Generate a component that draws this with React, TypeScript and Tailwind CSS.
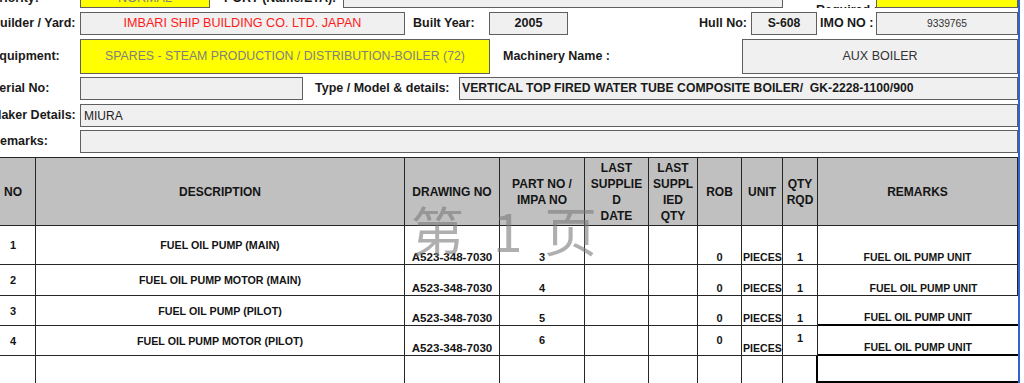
import React from "react";

const lbl = "shrink-0 flex items-center font-bold text-[12.5px] text-[#1a1a1a] whitespace-nowrap";
const box = "shrink-0 flex items-center border border-[#5f5f5f] bg-[#f0f0f0] whitespace-nowrap overflow-hidden";
const yel = "shrink-0 flex items-center border border-[#5f5f5f] bg-[#ffff00] whitespace-nowrap overflow-hidden";

const W = [
  "w-[45px]",
  "w-[369px]",
  "w-[95px]",
  "w-[85px]",
  "w-[64px]",
  "w-[49px]",
  "w-[44px]",
  "w-[41px]",
  "w-[35px]",
  "w-[200px]",
];

type Cell = { t?: string; c: string };

const hc = "shrink-0 flex items-center justify-center text-center border-r border-b border-[#262626]";

function Row({ h, cells }: { h: string; cells: Cell[] }) {
  return (
    <div className={"flex " + h}>
      {cells.map((cell, i) => (
        <div key={i} className={"shrink-0 flex whitespace-nowrap font-bold leading-[14px] text-[#141414] " + W[i] + " " + cell.c}>
          {cell.t ?? ""}
        </div>
      ))}
    </div>
  );
}

const b = " border-r border-b border-[#262626]";
const ctr = "items-center justify-center" + b;
const bot = "items-end justify-center" + b;

export default function App() {
  return (
    <div className="relative w-[1024px] h-[383px] overflow-hidden bg-white font-['Liberation_Sans',Arial,sans-serif] text-[#1a1a1a]">
      <div className="-ml-[9px] -mt-[15px] w-[1027px]">
        {/* Row 0 */}
        <div className="flex h-[23px]">
          <div className={lbl + " w-[89px] pt-[4px]"}>Priority:</div>
          <div className={yel + " w-[130px] justify-center pt-[3px] text-[12.6px] text-[#808080]"}>NORMAL</div>
          <div className={lbl + " w-[133px] pl-[14px] pt-[4px]"}>PORT (Name/ETA):</div>
          <div className={box + " w-[440px]"} />
          <div className="shrink-0 w-[93px] h-[23px] overflow-hidden">
            <div className="mt-[19px] pl-[33px] font-bold text-[12.5px] leading-[12.5px] whitespace-nowrap">Required :</div>
          </div>
          <div className={yel + " w-[142px]"} />
        </div>

        {/* Row 1 */}
        <div className="flex h-[23px] mt-[4px]">
          <div className={lbl + " w-[89px]"}>Builder / Yard:</div>
          <div className={box + " w-[325px] justify-center text-[12.6px] text-[#ff1a1a]"}>IMBARI SHIP BUILDING CO. LTD. JAPAN</div>
          <div className={lbl + " w-[84px] pl-[8px]"}>Built Year:</div>
          <div className={box + " w-[79px] justify-center font-bold text-[12.6px] text-[#1a1a1a]"}>2005</div>
          <div className={lbl + " w-[183px] justify-end pr-[4px]"}>Hull No:</div>
          <div className={box + " w-[66px] justify-center font-bold text-[12.2px] text-[#1a1a1a]"}>S-608</div>
          <div className={lbl + " w-[59px] pl-[3px]"}>IMO NO :</div>
          <div className={box + " w-[142px] justify-center text-[10.3px] text-[#333333]"}>9339765</div>
        </div>

        {/* Row 2 */}
        <div className="flex h-[35px] mt-[4px]">
          <div className={lbl + " w-[89px]"}>Equipment:</div>
          <div className={yel + " w-[410px] justify-center text-[12.3px] text-[#808080]"}>
            SPARES - STEAM PRODUCTION / DISTRIBUTION-BOILER (72)
          </div>
          <div className={lbl + " w-[252px] pl-[13px]"}>Machinery Name :</div>
          <div className={box + " w-[276px] justify-center text-[12.5px] text-[#333333]"}>AUX BOILER</div>
        </div>

        {/* Row 3 */}
        <div className="flex h-[23px] mt-[3px]">
          <div className={lbl + " w-[89px]"}>Serial No:</div>
          <div className={box + " w-[223px]"} />
          <div className={lbl + " w-[156px] pl-[12px]"}>Type / Model &amp; details:</div>
          <div className={box + " w-[559px] pl-[2px] font-bold text-[12.2px] text-[#1a1a1a] whitespace-pre"}>
            {"VERTICAL TOP FIRED WATER TUBE COMPOSITE BOILER/  GK-2228-1100/900"}
          </div>
        </div>

        {/* Row 4 */}
        <div className="flex h-[23px] mt-[4px]">
          <div className={lbl + " w-[89px]"}>Maker Details:</div>
          <div className={box + " w-[938px] pl-[3px] text-[12px] text-[#222222]"}>MIURA</div>
        </div>

        {/* Row 5 */}
        <div className="flex h-[23px] mt-[3px]">
          <div className={lbl + " w-[89px]"}>Remarks:</div>
          <div className={box + " w-[938px]"} />
        </div>

        {/* Table */}
        <div className="mt-[4px]">
          <div className="flex h-[69px] border-t border-[#262626] bg-[#c0c0c0] font-bold text-[12px] leading-[16px] text-[#141414]">
            <div className={hc + " " + W[0]}>NO</div>
            <div className={hc + " " + W[1]}>DESCRIPTION</div>
            <div className={hc + " " + W[2]}>DRAWING NO</div>
            <div className={hc + " " + W[3]}>
              PART NO /<br />
              IMPA NO
            </div>
            <div className={hc + " " + W[4]}>
              LAST
              <br />
              SUPPLIE
              <br />D<br />
              DATE
            </div>
            <div className={hc + " " + W[5]}>
              LAST
              <br />
              SUPPL
              <br />
              IED
              <br />
              QTY
            </div>
            <div className={hc + " " + W[6]}>ROB</div>
            <div className={hc + " " + W[7]}>UNIT</div>
            <div className={hc + " " + W[8]}>
              QTY
              <br />
              RQD
            </div>
            <div className={hc + " " + W[9]}>REMARKS</div>
          </div>

          <Row
            h="h-[39px]"
            cells={[
              { t: "1", c: ctr + " text-[11px]" },
              { t: "FUEL OIL PUMP (MAIN)", c: ctr + " text-[10.7px]" },
              { t: "A523-348-7030", c: bot + " text-[11.6px]" },
              { t: "3", c: bot + " text-[11px]" },
              { c: b },
              { c: b },
              { t: "0", c: bot + " text-[11px]" },
              { t: "PIECES", c: "items-end justify-start pl-[1px] text-[10.6px]" + b },
              { t: "1", c: bot + " text-[11px]" },
              { t: "FUEL OIL PUMP UNIT", c: bot + " text-[10.5px]" },
            ]}
          />
          <Row
            h="h-[31px]"
            cells={[
              { t: "2", c: ctr + " text-[11px]" },
              { t: "FUEL OIL PUMP MOTOR (MAIN)", c: ctr + " text-[10.7px]" },
              { t: "A523-348-7030", c: bot + " text-[11.6px]" },
              { t: "4", c: bot + " text-[11px]" },
              { c: b },
              { c: b },
              { t: "0", c: bot + " text-[11px]" },
              { t: "PIECES", c: "items-end justify-start pl-[1px] text-[10.6px]" + b },
              { t: "1", c: bot + " text-[11px]" },
              { t: "FUEL OIL PUMP UNIT", c: bot + " pl-[12px] text-[10.5px]" },
            ]}
          />
          <Row
            h="h-[30px]"
            cells={[
              { t: "3", c: ctr + " text-[11px]" },
              { t: "FUEL OIL PUMP (PILOT)", c: ctr + " text-[10.7px]" },
              { t: "A523-348-7030", c: bot + " text-[11.6px]" },
              { t: "5", c: bot + " text-[11px]" },
              { c: b },
              { c: b },
              { t: "0", c: bot + " text-[11px]" },
              { t: "PIECES", c: "items-end justify-start pl-[1px] text-[10.6px]" + b },
              { t: "1", c: bot + " text-[11px]" },
              { t: "FUEL OIL PUMP UNIT", c: "items-end justify-center text-[10.5px] border-b-2 border-black" },
            ]}
          />
          <Row
            h="h-[30px]"
            cells={[
              { t: "4", c: ctr + " text-[11px]" },
              { t: "FUEL OIL PUMP MOTOR (PILOT)", c: ctr + " text-[10.7px]" },
              { t: "A523-348-7030", c: bot + " text-[11.6px]" },
              { t: "6", c: ctr + " text-[11px] pb-[1px]" },
              { c: b },
              { c: b },
              { t: "0", c: ctr + " text-[11px] pb-[2px]" },
              { t: "PIECES", c: "items-end justify-start pl-[1px] text-[10.6px]" + b },
              { t: "1", c: "items-start justify-center pt-[5px] text-[11px]" + b },
              { t: "FUEL OIL PUMP UNIT", c: "items-end justify-center text-[10.5px] border-b-2 border-black" },
            ]}
          />
          <Row
            h="h-[27px]"
            cells={[
              { c: "border-r border-[#262626]" },
              { c: "border-r border-[#262626]" },
              { c: "border-r border-[#262626]" },
              { c: "border-r border-[#262626]" },
              { c: "border-r border-[#262626]" },
              { c: "border-r border-[#262626]" },
              { c: "border-r border-[#262626]" },
              { c: "border-r border-[#262626]" },
              { c: "border-r-2 border-black" },
              { c: "border-b-2 border-black" },
            ]}
          />
        </div>
      </div>

      {/* Watermark */}
      <div className="pointer-events-none absolute left-[411px] top-[203px] flex whitespace-pre font-['Noto_Sans_CJK_SC',sans-serif] text-[53px] leading-[53px] text-[#7a7a7a]/60">
        <span className="w-[54px]">第</span>
        <span className="w-[28px] overflow-hidden">{" "}</span>
        <span className="w-[28px] text-center">1</span>
        <span className="w-[23px] overflow-hidden">{" "}</span>
        <span>页</span>
      </div>

      {/* Page break line */}
      <div className="absolute left-[1018px] top-0 h-[383px] w-[2px] bg-[#3461d1]" />
    </div>
  );
}
